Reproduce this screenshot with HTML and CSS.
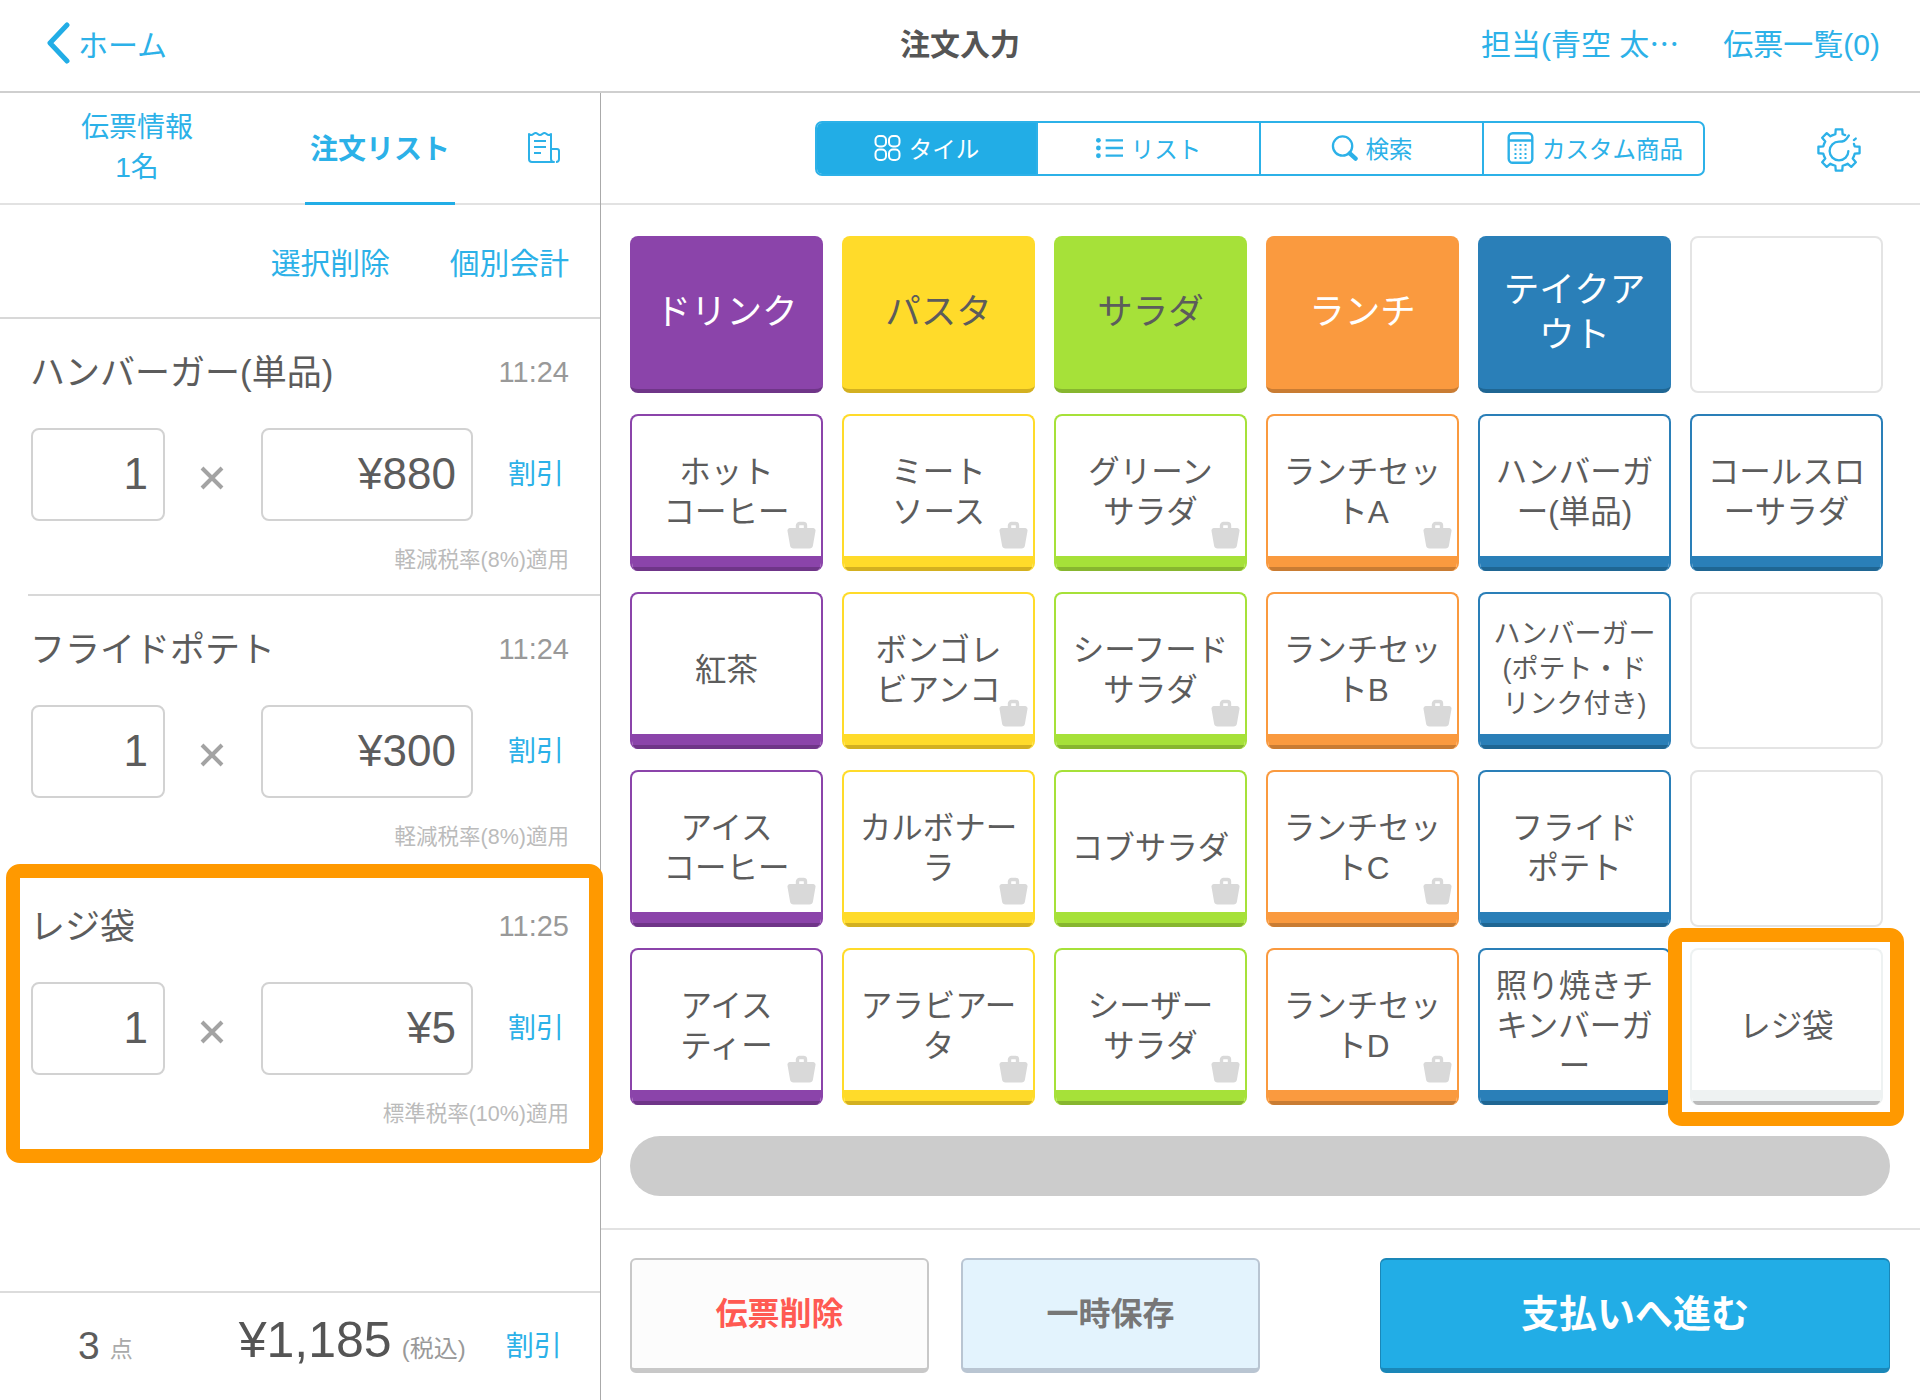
FILE: index.html
```html
<!DOCTYPE html>
<html lang="ja">
<head>
<meta charset="utf-8">
<title>注文入力</title>
<link rel="stylesheet" href="styles.css">
</head>
<body>
<svg class="defs" width="0" height="0" aria-hidden="true">
  <symbol id="bag" viewBox="0 0 29 29">
    <path d="M10.500 10V5.500a2 2 0 0 1 2-2h4a2 2 0 0 1 2 2V10" fill="none" stroke="currentColor" stroke-width="3.400"/>
    <path d="M3 8h23a2.500 2.500 0 0 1 2.500 3l-2.600 14.700a3.500 3.500 0 0 1-3.400 2.800H6.500a3.500 3.500 0 0 1-3.400-2.800L.5 11A2.500 2.500 0 0 1 3 8z" fill="currentColor"/>
  </symbol>
  <symbol id="tooth" viewBox="-24 -24 48 48" overflow="visible">
    <path d="M-5.930-14.320L-3.490-15.100L-3.130-19.750L3.130-19.750L3.490-15.100L5.930-14.320" fill="none" stroke="currentColor" stroke-width="2.200" stroke-linejoin="round" stroke-linecap="round"/>
  </symbol>
</svg>
<div class="app">
  <header class="topbar">
    <a class="back">
      <svg class="chevron" viewBox="0 0 24 42"><path d="M21 3L4 21l17 18" fill="none" stroke="currentColor" stroke-width="5" stroke-linecap="round" stroke-linejoin="round"/></svg>
      <span>ホーム</span>
    </a>
    <h1 class="title">注文入力</h1>
    <nav class="top-links">
      <a>担当(青空 太<span class="cjk">…</span></a>
      <a>伝票一覧(0)</a>
    </nav>
  </header>

  <main class="main">
    <section class="left">
      <div class="tabs">
        <a class="tab tab-info">伝票情報<br>1名</a>
        <a class="tab tab-active">注文リスト</a>
        <svg class="receipt" viewBox="0 0 34 32">
          <path d="M2 2q2.200 2 4.400 0t4.400 0t4.400 0t4.400 0t4.400 0V27q0 3 3 3H5q-3 0-3-3z M24 17h6a2 2 0 0 1 2 2v8q0 3-3 3" fill="none" stroke="currentColor" stroke-width="2" stroke-linejoin="round"/>
          <path d="M7 9h12M7 15h12M7 21h7" fill="none" stroke="currentColor" stroke-width="2"/>
        </svg>
      </div>
      <div class="actions">
        <a>選択削除</a>
        <a>個別会計</a>
      </div>
      <div class="items">
        <article class="item">
          <div class="item-head"><span class="item-name">ハンバーガー(単品)</span><span class="item-time">11:24</span></div>
          <div class="item-row">
            <div class="field field-qty">1</div>
            <svg class="times" viewBox="0 0 24 24"><path d="M2 2l20 20M22 2L2 22" stroke="currentColor" stroke-width="4"/></svg>
            <div class="field field-price">¥880</div>
            <a class="discount">割引</a>
          </div>
          <p class="tax">軽減税率(8%)適用</p>
        </article>
        <article class="item">
          <div class="item-head"><span class="item-name">フライドポテト</span><span class="item-time">11:24</span></div>
          <div class="item-row">
            <div class="field field-qty">1</div>
            <svg class="times" viewBox="0 0 24 24"><path d="M2 2l20 20M22 2L2 22" stroke="currentColor" stroke-width="4"/></svg>
            <div class="field field-price">¥300</div>
            <a class="discount">割引</a>
          </div>
          <p class="tax">軽減税率(8%)適用</p>
        </article>
        <article class="item item-last">
          <div class="item-head"><span class="item-name">レジ袋</span><span class="item-time">11:25</span></div>
          <div class="item-row">
            <div class="field field-qty">1</div>
            <svg class="times" viewBox="0 0 24 24"><path d="M2 2l20 20M22 2L2 22" stroke="currentColor" stroke-width="4"/></svg>
            <div class="field field-price">¥5</div>
            <a class="discount">割引</a>
          </div>
          <p class="tax">標準税率(10%)適用</p>
        </article>
      </div>
      <footer class="summary">
        <span class="count">3</span><span class="count-unit">点</span>
        <span class="total">¥1,185</span><span class="total-note">(税込)</span>
        <a class="discount">割引</a>
      </footer>
    </section>

    <section class="right">
      <div class="toolbar">
        <div class="segments">
          <a class="segment segment-on">
            <svg class="seg-icon" viewBox="0 0 26 26"><g fill="none" stroke="currentColor" stroke-width="2"><rect x="1" y="1" width="10.500" height="10.500" rx="4"/><rect x="14.500" y="1" width="10.500" height="10.500" rx="4"/><rect x="1" y="14.500" width="10.500" height="10.500" rx="4"/><rect x="14.500" y="14.500" width="10.500" height="10.500" rx="4"/></g></svg>
            タイル
          </a>
          <a class="segment">
            <svg class="seg-icon" viewBox="0 0 28 22"><g fill="currentColor"><circle cx="2.500" cy="3" r="2.500"/><circle cx="2.500" cy="11" r="2.500"/><circle cx="2.500" cy="19" r="2.500"/></g><path d="M10 3h18M10 11h18M10 19h18" stroke="currentColor" stroke-width="2.400"/></svg>
            リスト
          </a>
          <a class="segment">
            <svg class="seg-icon" viewBox="0 0 28 26"><circle cx="12" cy="11" r="10" fill="none" stroke="currentColor" stroke-width="2.400"/><path d="M19.500 18.500L25.500 24" stroke="currentColor" stroke-width="4.500" stroke-linecap="round"/></svg>
            検索
          </a>
          <a class="segment">
            <svg class="seg-icon seg-calc" viewBox="0 0 26 32"><rect x="1.200" y="1.200" width="23.600" height="29.600" rx="4" fill="none" stroke="currentColor" stroke-width="2.400"/><path d="M1.200 8.500h23.600" stroke="currentColor" stroke-width="2.400"/><path d="M7 13h12M7 17.500h12M7 22h12M7 26h12" stroke="currentColor" stroke-width="2" stroke-dasharray="2 3"/></svg>
            カスタム商品
          </a>
        </div>
        <svg class="gear" viewBox="-24 -24 48 48">
          <use href="#tooth" x="-24" y="-24" width="48" height="48"/>
          <use href="#tooth" x="-24" y="-24" width="48" height="48" transform="rotate(90)"/>
          <use href="#tooth" x="-24" y="-24" width="48" height="48" transform="rotate(135)"/>
          <use href="#tooth" x="-24" y="-24" width="48" height="48" transform="rotate(180)"/>
          <use href="#tooth" x="-24" y="-24" width="48" height="48" transform="rotate(225)"/>
          <use href="#tooth" x="-24" y="-24" width="48" height="48" transform="rotate(270)"/>
          <use href="#tooth" x="-24" y="-24" width="48" height="48" transform="rotate(315)"/>
          <path d="M9 1a9 9 0 1 1-9-9c4 0 6 0 9.500-6M14.300-9.500l1.800-1.500" fill="none" stroke="currentColor" stroke-width="2.200" stroke-linecap="round"/>
        </svg>
      </div>

      <div class="grid">
        <button class="tile tile-head c-purple"><span class="tile-label">ドリンク</span></button>
        <button class="tile tile-head c-yellow"><span class="tile-label">パスタ</span></button>
        <button class="tile tile-head c-green"><span class="tile-label">サラダ</span></button>
        <button class="tile tile-head c-orange"><span class="tile-label">ランチ</span></button>
        <button class="tile tile-head c-blue"><span class="tile-label">テイクア<br>ウト</span></button>
        <div class="tile tile-empty"></div>

        <button class="tile c-purple"><span class="tile-label">ホット<br>コーヒー</span><span class="band"></span><svg class="bag"><use href="#bag"/></svg></button>
        <button class="tile c-yellow"><span class="tile-label">ミート<br>ソース</span><span class="band"></span><svg class="bag"><use href="#bag"/></svg></button>
        <button class="tile c-green"><span class="tile-label">グリーン<br>サラダ</span><span class="band"></span><svg class="bag"><use href="#bag"/></svg></button>
        <button class="tile c-orange"><span class="tile-label">ランチセッ<br>トA</span><span class="band"></span><svg class="bag"><use href="#bag"/></svg></button>
        <button class="tile c-blue"><span class="tile-label">ハンバーガ<br>ー(単品)</span><span class="band"></span></button>
        <button class="tile c-blue"><span class="tile-label">コールスロ<br>ーサラダ</span><span class="band"></span></button>

        <button class="tile c-purple"><span class="tile-label">紅茶</span><span class="band"></span></button>
        <button class="tile c-yellow"><span class="tile-label">ボンゴレ<br>ビアンコ</span><span class="band"></span><svg class="bag"><use href="#bag"/></svg></button>
        <button class="tile c-green"><span class="tile-label">シーフード<br>サラダ</span><span class="band"></span><svg class="bag"><use href="#bag"/></svg></button>
        <button class="tile c-orange"><span class="tile-label">ランチセッ<br>トB</span><span class="band"></span><svg class="bag"><use href="#bag"/></svg></button>
        <button class="tile c-blue"><span class="tile-label tile-label-small">ハンバーガー<br>(ポテト・ド<br>リンク付き)</span><span class="band"></span></button>
        <div class="tile tile-empty"></div>

        <button class="tile c-purple"><span class="tile-label">アイス<br>コーヒー</span><span class="band"></span><svg class="bag"><use href="#bag"/></svg></button>
        <button class="tile c-yellow"><span class="tile-label">カルボナー<br>ラ</span><span class="band"></span><svg class="bag"><use href="#bag"/></svg></button>
        <button class="tile c-green"><span class="tile-label">コブサラダ</span><span class="band"></span><svg class="bag"><use href="#bag"/></svg></button>
        <button class="tile c-orange"><span class="tile-label">ランチセッ<br>トC</span><span class="band"></span><svg class="bag"><use href="#bag"/></svg></button>
        <button class="tile c-blue"><span class="tile-label">フライド<br>ポテト</span><span class="band"></span></button>
        <div class="tile tile-empty"></div>

        <button class="tile c-purple"><span class="tile-label">アイス<br>ティー</span><span class="band"></span><svg class="bag"><use href="#bag"/></svg></button>
        <button class="tile c-yellow"><span class="tile-label">アラビアー<br>タ</span><span class="band"></span><svg class="bag"><use href="#bag"/></svg></button>
        <button class="tile c-green"><span class="tile-label">シーザー<br>サラダ</span><span class="band"></span><svg class="bag"><use href="#bag"/></svg></button>
        <button class="tile c-orange"><span class="tile-label">ランチセッ<br>トD</span><span class="band"></span><svg class="bag"><use href="#bag"/></svg></button>
        <button class="tile c-blue"><span class="tile-label">照り焼きチ<br>キンバーガ<br>ー</span><span class="band"></span></button>
        <button class="tile c-plain"><span class="tile-label">レジ袋</span><span class="band"></span></button>
      </div>

      <div class="scrollbar"></div>

      <footer class="buttons">
        <button class="btn btn-delete">伝票削除</button>
        <button class="btn btn-hold">一時保存</button>
        <button class="btn btn-pay">支払いへ進む</button>
      </footer>
    </section>
  </main>

  <div class="callout callout-item"></div>
  <div class="callout callout-tile"></div>
</div>
</body>
</html>
```
FILE: styles.css
```css
* { box-sizing: border-box; }
html, body { margin: 0; padding: 0; background: #fff; }
body {
  font-family: "Liberation Sans", "Noto Sans CJK JP", sans-serif;
  color: #5c5c5c;
  font-weight: 400;
}
.defs { position: absolute; }
.cjk { font-family: "Noto Sans CJK JP", sans-serif; }
.app { position: relative; width: 1920px; height: 1400px; display: flex; flex-direction: column; overflow: hidden; }

/* top bar */
.topbar {
  height: 93px;
  flex: none;
  display: grid;
  grid-template-columns: 1fr auto 1fr;
  align-items: center;
  border-bottom: 2px solid #cfcfcf;
  padding-bottom: 6px;
  color: #2cb1e8;
  font-size: 30px;
}
.back { display: flex; align-items: center; padding-left: 46px; gap: 8px; }
.chevron { width: 24px; height: 42px; color: #22ade6; }
.title { margin: 0 0 1px; font-size: 30px; font-weight: 700; color: #555; }
.top-links { display: flex; justify-content: flex-end; gap: 44px; padding: 0 40px 1px 0; }

.main { flex: 1; display: flex; min-height: 0; }

/* left column */
.left { width: 601px; flex: none; border-right: 1px solid #aaa; display: flex; flex-direction: column; }
.tabs { height: 112px; flex: none; display: flex; align-items: stretch; border-bottom: 2px solid #e2e2e2; color: #2cb1e8; font-size: 28px; }
.tab-info { width: 274px; text-align: center; line-height: 40px; padding-top: 15px; }
.tab-active { width: 150px; margin-left: 31px; margin-right: 1px; padding-bottom: 2px; display: flex; align-items: center; justify-content: center; font-weight: 700; border-bottom: 3px solid #22ade6; margin-bottom: -2px; }
.receipt { width: 34px; height: 32px; margin: 39px 0 0 71px; color: #2cb1e8; }
.actions { height: 114px; flex: none; display: flex; justify-content: flex-end; align-items: center; gap: 60px; padding-right: 31px; color: #2cb1e8; font-size: 29.800px; border-bottom: 2px solid #d8d8d8; }
.items { flex: 1; min-height: 0; }
.item { height: 277px; margin-left: 28px; padding: 0 31px 0 2px; border-bottom: 2px solid #d8d8d8; }
.item-last { border-bottom: 0; }
.item-head { height: 107px; display: flex; justify-content: space-between; align-items: center; }
.item-name { font-size: 35px; margin-bottom: 7px; }
.item-time { font-size: 29px; color: #999; }
.item-row { display: flex; align-items: center; height: 93px; margin: 2px 0 0 1px; }
.field { height: 93px; border: 2px solid #d2d2d2; border-radius: 8px; display: flex; align-items: center; justify-content: flex-end; font-size: 44px; padding: 0 15px 2px 0; line-height: 1; }
.field-qty { width: 134px; }
.field-price { width: 212px; }
.times { width: 24px; height: 24px; margin: 6px 37px 0 35px; color: #a3a3a3; }
.discount { color: #2cb1e8; font-size: 28px; margin: 0 0 5px 35px; }
.tax { margin: 24px 0 0; font-size: 21.500px; line-height: 30px; color: #bbb; text-align: right; }
.summary { height: 109px; flex: none; border-top: 2px solid #dcdcdc; display: flex; align-items: center; padding: 0 0 0 78px; }
.count { font-size: 39px; margin-bottom: 2px; }
.count-unit { font-size: 23px; color: #aaa; margin: 1px 0 0 10px; width: 129px; }
.total { font-size: 50px; margin-bottom: 14px; color: #555; }
.total-note { font-size: 24px; color: #999; margin: 0 0 0 10px; }
.summary .discount { margin: 0 0 6px 40px; }

/* right column */
.right { flex: 1; display: flex; flex-direction: column; min-width: 0; }
.toolbar { height: 112px; flex: none; position: relative; display: flex; align-items: center; border-bottom: 2px solid #e2e2e2; padding: 0 0 0 214px; }
.segments { width: 890px; height: 55px; display: grid; grid-template-columns: 221px 223px 223px 219px; border: 2px solid #2cb1e8; border-radius: 7px; overflow: hidden; color: #2cb1e8; font-size: 23.500px; }
.segment { display: flex; align-items: center; justify-content: center; gap: 8px; border-right: 2px solid #2cb1e8; }
.segment:last-child { border-right: 0; padding-left: 3px; }
.segment-on { background: #22ade6; color: #fff; }
.seg-icon { width: 27px; height: 26px; flex: none; }
.seg-calc { height: 32px; }
.gear { width: 50px; height: 50px; margin: 3px 0 0 109px; color: #2cb1e8; }

.grid {
  flex: none;
  display: grid;
  grid-template-columns: repeat(6, 193px);
  grid-auto-rows: 157px;
  column-gap: 19px;
  row-gap: 21px;
  padding: 31px 0 0 29px;
}
.tile {
  position: relative;
  display: flex;
  flex-direction: column;
  align-items: stretch;
  padding: 0;
  font: inherit;
  background: #fff;
  color: #5c5c5c;
  border: 2px solid var(--c);
  border-bottom: 0;
  border-radius: 8px;
  overflow: hidden;
}
.tile-label { flex: 1; display: flex; align-items: center; justify-content: center; text-align: center; font-size: 31.500px; line-height: 40px; padding-top: 12px; }
.tile-label-small { font-size: 27px; line-height: 35px; padding-top: 10px; }
.band { flex: none; height: 15px; background: var(--c); border-bottom: 4px solid var(--d); }
.bag { position: absolute; right: 5px; bottom: 22px; width: 29px; height: 29px; color: #d9d9d9; }
.tile-head { background: var(--c); border: 0; border-bottom: 4px solid var(--d); }
.tile-head .tile-label { font-size: 35.500px; line-height: 45px; padding-top: 0; }
.tile-head.c-purple, .tile-head.c-orange, .tile-head.c-blue { color: #fff; }
.c-purple { --c: #8b44aa; --d: #6f3588; }
.c-yellow { --c: #ffdb2a; --d: #d3b020; }
.c-green { --c: #a6e139; --d: #87b62f; }
.c-orange { --c: #fa9a3f; --d: #c97c33; }
.c-blue { --c: #2a7fb8; --d: #1f6693; }
.c-plain { --c: #eef2f2; --d: #bbb; }
.tile-empty { border: 2px solid #e4e4e4; background: #fff; }

.scrollbar { flex: none; width: 1260px; height: 60px; margin: 31px 0 0 29px; background: #ccc; border-radius: 30px; }

.buttons { flex: 1; display: flex; margin-top: 32px; padding: 28px 0 0 29px; border-top: 2px solid #e2e2e2; align-items: flex-start; }
.btn { height: 115px; font: inherit; font-weight: 700; border-radius: 6px; padding: 0 0 7px; }
.btn-delete { width: 299px; font-size: 32px; color: #ff5a52; background: #fcfcfc; border: 2px solid #c8c8c8; border-bottom-width: 5px; }
.btn-hold { width: 299px; margin-left: 32px; font-size: 32px; color: #777; background: #e3f3fd; border: 2px solid #b9c5d2; border-bottom-width: 5px; }
.btn-pay { width: 510px; margin-left: 120px; font-size: 38px; color: #fff; background: #22ade6; border: 2px solid #1a87b8; border-width: 2px 1px 5px; }

/* highlight callouts, laid over the screen */
.callout { position: absolute; border: 14px solid #ff9900; pointer-events: none; }
.callout-item { left: 6px; top: 864px; width: 597px; height: 299px; border-radius: 14px; }
.callout-tile { left: 1668px; top: 928px; width: 236px; height: 198px; border-radius: 14px; }
```
